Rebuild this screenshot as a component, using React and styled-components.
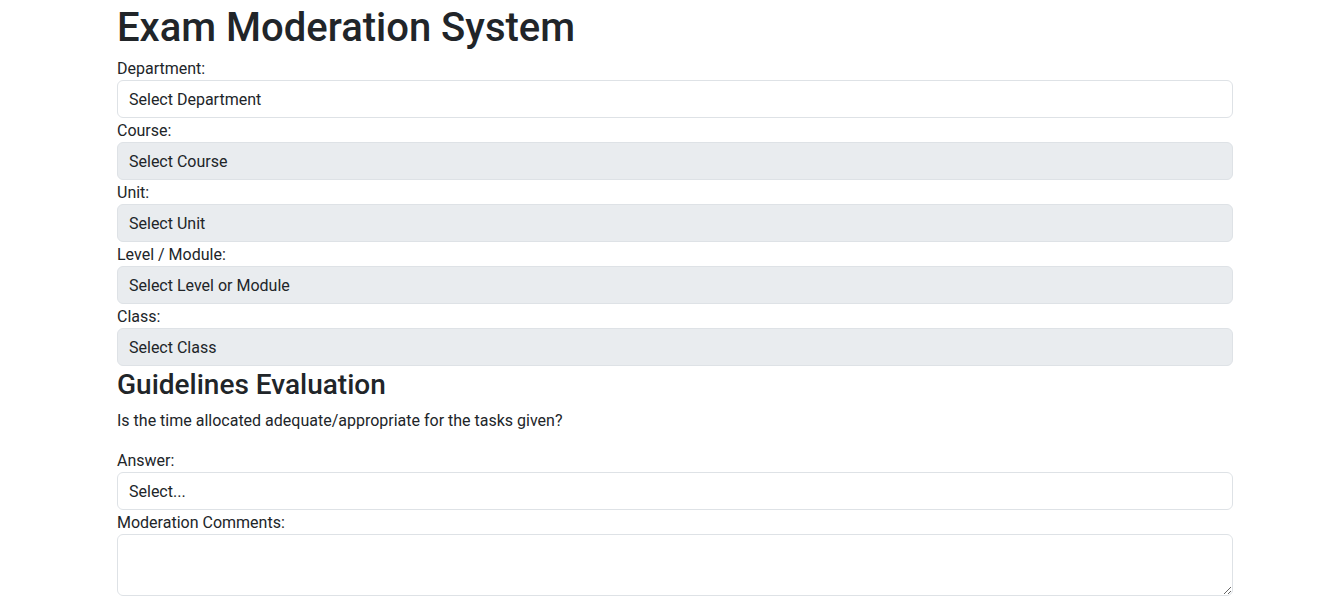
import React from "react";
import styled, { createGlobalStyle } from "styled-components";

const GlobalStyle = createGlobalStyle`
    *, *::before, *::after {
        box-sizing : border-box;
    }
    body {
        margin : 0;
        font-family : Roboto, "Liberation Sans", sans-serif;
        font-size : 16px;
        line-height : 1.5;
        color : #212529;
        background-color : #fff;
    }
`;

const fields = [
    {label : "Department:", placeholder : "Select Department", disabled : false},
    {label : "Course:", placeholder : "Select Course", disabled : true},
    {label : "Unit:", placeholder : "Select Unit", disabled : true},
    {label : "Level / Module:", placeholder : "Select Level or Module", disabled : true},
    {label : "Class:", placeholder : "Select Class", disabled : true},
];

const App = () => (
    <>
        <GlobalStyle/>
        <Container>
            <Title>Exam Moderation System</Title>
            {fields.map(field => (
                <Field key={field.label}>
                    <Label>{field.label}</Label>
                    <Select disabled={field.disabled} defaultValue="">
                        <option value="">{field.placeholder}</option>
                    </Select>
                </Field>
            ))}
            <SectionTitle>Guidelines Evaluation</SectionTitle>
            <Question>Is the time allocated adequate/appropriate for the tasks given?</Question>
            <Field>
                <Label>Answer:</Label>
                <Select defaultValue="">
                    <option value="">Select...</option>
                </Select>
            </Field>
            <Field>
                <Label>Moderation Comments:</Label>
                <Comments rows={2}/>
            </Field>
        </Container>
    </>
);

const Container = styled.div`
    width : 1116px;
    margin-left : 117px;
`;

const Title = styled.h1`
    margin : 0 0 4px;
    padding-top : 4px;
    font-size : 40px;
    font-weight : 500;
    line-height : 48px;
`;

const SectionTitle = styled.h3`
    margin : 0 0 6px;
    padding-top : 2px;
    font-size : 28px;
    font-weight : 500;
    line-height : 33.6px;
`;

const Question = styled.p`
    margin : 0 0 15px;
    padding-top : 1px;
`;

const Field = styled.div`
    display : flex;
    flex-direction : column;
`;

const Label = styled.label`
    display : block;
    height : 24px;
    padding-top : 1px;
    line-height : 24px;
`;

const Select = styled.select`
    appearance : none;
    display : block;
    width : 100%;
    height : 38px;
    padding : 7px 12px 5px 11px;
    font-family : inherit;
    font-size : 16px;
    line-height : 1.5;
    color : #212529;
    background-color : ${props => props.disabled ? "#e9ecef" : "#fff"};
    border : 1px solid #dee2e6;
    border-radius : 6px;
    opacity : 1;
    outline : none;
`;

const Comments = styled.textarea`
    display : block;
    width : 100%;
    height : 62px;
    padding : 6px 12px;
    font-family : inherit;
    font-size : 16px;
    line-height : 1.5;
    color : #212529;
    border : 1px solid #dee2e6;
    border-radius : 6px;
    resize : vertical;
`;

export default App;
